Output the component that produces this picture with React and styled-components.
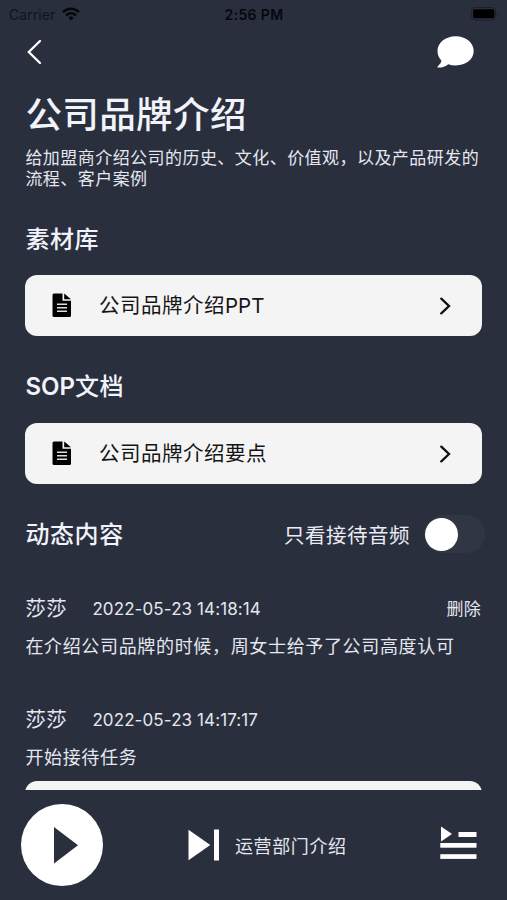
import React, { useState } from 'react';
import styled, { createGlobalStyle } from 'styled-components';

const GlobalStyle = createGlobalStyle`
    * { box-sizing: border-box; }
    body {
        margin: 0;
        background: #2a2f3d;
        font-family: Inter, "Noto Sans CJK SC", sans-serif;
    }
    button {
        padding: 0;
        border: 0;
        background: none;
        font: inherit;
        color: inherit;
    }
    svg { display: block; }
`

const Screen = styled.div`
    display: flex;
    flex-direction: column;
    width: 507px;
    height: 900px;
    overflow: hidden;
    background: #2a2f3d;
    color: #f1f3fb;
`

const StatusBar = styled.div`
    display: grid;
    grid-template-columns: 1fr auto 1fr;
    align-items: center;
    flex: none;
    height: 28px;
    padding: 0 8px 0 9px;
    color: #05070c;
    font-size: 14px;
`

const Carrier = styled.div`
    display: flex;
    align-items: center;
    gap: 7px;
    letter-spacing: 0.05px;
    color: #10141c;
`

const Clock = styled.div`
    font-weight: 600;
    letter-spacing: 0.35px;
`

const BatterySlot = styled.div`
    display: flex;
    justify-content: flex-end;
`

const NavBar = styled.div`
    display: flex;
    justify-content: space-between;
    align-items: center;
    flex: none;
    height: 48px;
    padding: 0 33px 0 27px;
`

const Content = styled.div`
    flex: 1;
    min-height: 0;
    overflow: hidden;
    padding: 14px 25px 0 25.4px;
`

const Title = styled.h1`
    margin: 0;
    height: 50px;
    line-height: 50px;
    font-size: 36.5px;
    font-weight: 500;
    letter-spacing: 0.4px;
    white-space: nowrap;
`

const Description = styled.p`
    margin: 8px -10px 0 0;
    height: 41px;
    line-height: 20.5px;
    font-size: 17px;
    letter-spacing: 0.45px;
    color: #e4e7f1;
`

const SectionHead = styled.div`
    display: flex;
    justify-content: space-between;
    align-items: center;
    height: 38px;
    margin: ${props => props.$top}px -3px 0 0;
`

const SectionTitle = styled.h2`
    margin: 0;
    padding-top: 1px;
    font-size: 24px;
    font-weight: 500;
    letter-spacing: 0.6px;
    line-height: 36px;
`

const Latin = styled.span`
    font-weight: ${props => props.$weight || 400};
    letter-spacing: ${props => props.$spacing || 0}px;
`

const FileCard = styled.div`
    display: flex;
    align-items: center;
    width: 457px;
    height: 61px;
    margin-top: ${props => props.$top}px;
    padding: 0 31px 0 26.6px;
    border-radius: 12px;
    background: #f4f4f4;
    color: #151515;
`

const FileName = styled.div`
    flex: 1;
    margin-left: 27px;
    padding-top: 1px;
    font-size: 20.5px;
    letter-spacing: 0.5px;
    line-height: 30px;
`

const FilterLabel = styled.div`
    display: flex;
    align-items: center;
    gap: 14px;
    font-size: 20.5px;
    letter-spacing: 0.5px;
    color: #e9ecf5;
`

const Track = styled.button`
    display: flex;
    align-items: center;
    justify-content: ${props => props.$on ? 'flex-end' : 'flex-start'};
    width: 61px;
    height: 38px;
    padding: 0 1px;
    border-radius: 19px;
    background: ${props => props.$on ? '#34c759' : '#303742'};
`

const Knob = styled.span`
    width: 33px;
    height: 33px;
    border-radius: 50%;
    background: #fff;
`

const Record = styled.div`
    margin-top: ${props => props.$top}px;
    color: #e4e7f1;
`

const RecordHead = styled.div`
    display: flex;
    align-items: center;
    height: 30px;
    line-height: 30px;
    padding-right: 1px;
`

const Author = styled.div`
    width: 67px;
    padding-top: 1px;
    font-size: 20.5px;
    letter-spacing: 0.3px;
`

const Time = styled.div`
    flex: 1;
    font-size: 17px;
    letter-spacing: 0.1px;
`

const DeleteButton = styled.button`
    font-size: 17px;
    letter-spacing: 0.2px;
`

const RecordText = styled.div`
    height: 28px;
    margin-top: 9px;
    line-height: 28px;
    font-size: 18px;
    letter-spacing: 0.66px;
    white-space: nowrap;
`

const Player = styled.div`
    display: flex;
    align-items: center;
    flex: none;
    height: 110px;
    padding: 0 30px 0 21px;
`

const PlayButton = styled.button`
    display: flex;
    align-items: center;
    justify-content: center;
    width: 82px;
    height: 82px;
    border-radius: 50%;
    background: #fff;
`

const NextTrack = styled.div`
    display: flex;
    align-items: center;
    flex: 1;
    gap: 15px;
    margin-left: 85px;
    font-size: 18px;
    letter-spacing: 0.6px;
    color: #e4e7f1;
`

const WifiIcon = () => (
    <svg width="18" height="14" viewBox="0 0 18 14" fill="none" stroke="#05070c" strokeWidth="2.6">
        <path d="M1 5.2C5.4 0.6 12.6 0.6 17 5.2" />
        <path d="M4 8.3C6.8 5.5 11.2 5.5 14 8.3" />
        <path d="M9 13.4L6.2 10.5C7.8 9 10.2 9 11.8 10.5Z" fill="#05070c" stroke="none" />
    </svg>
)

const BatteryIcon = () => (
    <svg width="28" height="14" viewBox="0 0 28 14">
        <rect x="0.5" y="0.5" width="24" height="12.5" rx="3.5" fill="none" stroke="#1c202a" />
        <rect x="2" y="2.3" width="21.3" height="9" rx="2" fill="#000" />
        <path d="M26 4.8C27.5 5.4 27.5 8 26 8.6Z" fill="#1c202a" />
    </svg>
)

const BackIcon = () => (
    <svg width="15" height="26" viewBox="0 0 15 26" fill="none" stroke="#fff" strokeWidth="2.3" strokeLinecap="round">
        <path d="M13 2L1.8 13L13 24" />
    </svg>
)

const ChatIcon = () => (
    <svg width="37" height="33" viewBox="0 0 37 33" fill="#fff">
        <path d="M18.8 0.3C29 0.3 36.7 6.8 36.7 15C36.7 23.3 29 29.4 18.8 29.4C16 29.4 13.5 29 11.2 28.2C8.5 30.5 4.8 31.8 1 31.6C0.3 31.5 0.2 30.9 0.7 30.4C2.9 28.5 4.2 26.6 4.4 24.6C1.9 22.1 0.5 18.9 0.5 15C0.5 6.8 8.4 0.3 18.8 0.3Z" />
    </svg>
)

const FileIcon = () => (
    <svg width="20" height="25" viewBox="0 0 20 25">
        <path d="M2 0.5H10.5V7.7H19V22.5Q19 24 17.5 24H2Q0.5 24 0.5 22.5V2Q0.5 0.5 2 0.5Z" fill="#000" />
        <path d="M12.2 0.5L19 6.2H12.2Z" fill="#000" />
        <path d="M5 11.3H15M5 14.7H15M5 18.2H15" stroke="#ddd" strokeWidth="1.5" />
    </svg>
)

const ArrowIcon = () => (
    <svg width="12" height="18" viewBox="0 0 12 18" fill="none" stroke="#111" strokeWidth="2.3" strokeLinecap="round">
        <path d="M2.3 1.6L10 9L2.3 16.4" />
    </svg>
)

const PlayIcon = () => (
    <svg width="82" height="82" viewBox="0 0 82 82">
        <path d="M33 23V59.5L57 41.3Z" fill="#2a2f3d" />
    </svg>
)

const NextIcon = () => (
    <svg width="32" height="32" viewBox="0 0 32 32" fill="#fff">
        <path d="M0.5 0.7V31.3L22.3 16Z" />
        <rect x="26" y="0.5" width="5" height="31" />
    </svg>
)

const PlaylistIcon = () => (
    <svg width="37" height="38" viewBox="0 0 37 38" fill="#fff">
        <path d="M1 0.5V15.5L12 8Z" />
        <rect x="18.5" y="6" width="18" height="5" />
        <rect x="0.3" y="17" width="36.2" height="4.7" />
        <rect x="0.3" y="28.2" width="36.2" height="4.7" />
    </svg>
)

const records = [
    { id: 1, top: 40.5, author: '莎莎', time: '2022-05-23 14:18:14', text: '在介绍公司品牌的时候，周女士给予了公司高度认可', removable: true },
    { id: 2, top: 44, author: '莎莎', time: '2022-05-23 14:17:17', text: '开始接待任务' },
]

const FileRow = (props) => (
    <FileCard $top={props.top}>
        <FileIcon />
        <FileName>{props.children}</FileName>
        <ArrowIcon />
    </FileCard>
)

const App = () => {
    const [audioOnly, setAudioOnly] = useState(false);

    return (
        <Screen>
            <GlobalStyle />
            <StatusBar>
                <Carrier>Carrier <WifiIcon /></Carrier>
                <Clock>2:56 PM</Clock>
                <BatterySlot><BatteryIcon /></BatterySlot>
            </StatusBar>
            <NavBar>
                <BackIcon />
                <ChatIcon />
            </NavBar>
            <Content>
                <Title>公司品牌介绍</Title>
                <Description>
                    给加盟商介绍公司的历史、文化、价值观，以及产品研发的<br />
                    流程、客户案例
                </Description>
                <SectionHead $top={31}>
                    <SectionTitle>素材库</SectionTitle>
                </SectionHead>
                <FileRow top={17}>公司品牌介绍<Latin>PPT</Latin></FileRow>
                <SectionHead $top={31}>
                    <SectionTitle><Latin $weight={600}>SOP</Latin>文档</SectionTitle>
                </SectionHead>
                <FileRow top={18}>公司品牌介绍要点</FileRow>
                <SectionHead $top={31}>
                    <SectionTitle>动态内容</SectionTitle>
                    <FilterLabel>
                        只看接待音频
                        <Track $on={audioOnly} onClick={() => setAudioOnly(!audioOnly)}><Knob /></Track>
                    </FilterLabel>
                </SectionHead>
                {records.map(item => (
                    <Record key={item.id} $top={item.top}>
                        <RecordHead>
                            <Author>{item.author}</Author>
                            <Time>{item.time}</Time>
                            {item.removable && <DeleteButton>删除</DeleteButton>}
                        </RecordHead>
                        <RecordText>{item.text}</RecordText>
                    </Record>
                ))}
                <FileCard $top={9} />
            </Content>
            <Player>
                <PlayButton><PlayIcon /></PlayButton>
                <NextTrack>
                    <NextIcon />
                    运营部门介绍
                </NextTrack>
                <PlaylistIcon />
            </Player>
        </Screen>
    );
}

export default App;
